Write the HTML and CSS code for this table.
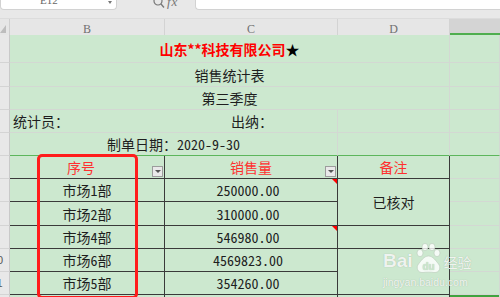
FILE: index.html
```html
<!DOCTYPE html>
<html lang="zh">
<head>
<meta charset="utf-8">
<link rel="stylesheet" href="styles.css">
</head>
<body>
<div class="app">
  <div class="toolbar">
    <div class="namebox"><span class="cellref">E12</span><span class="nb-arrow"></span></div>
    <div class="fxzone">
      <svg class="mag" width="12" height="10" viewBox="0 0 12 10"><circle cx="5" cy="2" r="4" fill="none" stroke="#777" stroke-width="1.2"/><line x1="8" y1="5" x2="11" y2="8.5" stroke="#777" stroke-width="1.3"/></svg>
      <span class="fx">fx</span>
    </div>
    <div class="formula"></div>
  </div>
  <div class="colheads">
    <div class="corner"><span class="tri"></span></div>
    <div class="ch">B</div>
    <div class="ch">C</div>
    <div class="ch">D</div>
    <div class="ch ch-sel"></div>
  </div>
  <div class="sheet">
    <!-- row 1 -->
    <div class="rh"></div>
    <div class="c span3 center title">山东**科技有限公司<span class="star">★</span></div>
    <div class="c"></div>
    <!-- row 2 -->
    <div class="rh"></div>
    <div class="c span3 center">销售统计表</div>
    <div class="c"></div>
    <!-- row 3 -->
    <div class="rh"></div>
    <div class="c span3 center">第三季度</div>
    <div class="c"></div>
    <!-- row 4 -->
    <div class="rh"></div>
    <div class="c span2 left"><span class="lbl">统计员：</span><span>出纳：</span></div>
    <div class="c"></div>
    <div class="c"></div>
    <!-- row 5 -->
    <div class="rh"></div>
    <div class="c span2 center gb">制单日期：2020-9-30</div>
    <div class="c gb"></div>
    <div class="c gb"></div>
    <!-- row 6 header -->
    <div class="rh"></div>
    <div class="c th tb center hb"><span class="ht">序号</span><span class="filter"></span></div>
    <div class="c th tb center"><span class="ht">销售量</span><span class="filter"></span></div>
    <div class="c th tb center">备注</div>
    <div class="c"></div>
    <!-- row 7 -->
    <div class="rh"></div>
    <div class="c tb center">市场1部</div>
    <div class="c tb center num cmt">250000.00</div>
    <div class="c tb center rows2">已核对</div>
    <div class="c"></div>
    <!-- row 8 -->
    <div class="rh"></div>
    <div class="c tb center">市场2部</div>
    <div class="c tb center num">310000.00</div>
    <div class="c"></div>
    <!-- row 9 -->
    <div class="rh"></div>
    <div class="c tb center">市场4部</div>
    <div class="c tb center num cmt">546980.00</div>
    <div class="c tb"></div>
    <div class="c"></div>
    <!-- row 10 -->
    <div class="rh"><span class="rn">10</span></div>
    <div class="c tb center">市场6部</div>
    <div class="c tb center num">4569823.00</div>
    <div class="c tb rows2"></div>
    <div class="c"></div>
    <!-- row 11 -->
    <div class="rh"><span class="rn">11</span></div>
    <div class="c tb center">市场5部</div>
    <div class="c tb center num">354260.00</div>
    <div class="c"></div>
    <!-- row 12 -->
    <div class="rh"></div>
    <div class="c tb"></div>
    <div class="c tb"></div>
    <div class="c tb"></div>
    <div class="c sel"></div>
  </div>
  <div class="frame"></div>
  <div class="watermark">
    <div class="wm-top">
      <span class="wm-bai">Bai</span>
      <svg class="paw" width="27" height="31" viewBox="0 0 27 31">
        <g fill="#ffffff" fill-opacity="0.8" stroke="#b9c9bb" stroke-width="0.6">
          <ellipse cx="5" cy="10" rx="3" ry="3.6"/>
          <ellipse cx="10" cy="4" rx="3" ry="3.6"/>
          <ellipse cx="17" cy="4" rx="3" ry="3.6"/>
          <ellipse cx="22" cy="10" rx="3" ry="3.6"/>
          <path d="M13.5 13 C9 13 6 18 3.5 21 C1 24 2 30 8 29.5 C11 29 16 29 19 29.5 C25 30 26 24 23.5 21 C21 18 18 13 13.5 13 Z"/>
        </g>
        <text x="13.5" y="27" text-anchor="middle" font-family="Liberation Sans, sans-serif" font-weight="bold" font-size="10" fill="#cce8cf">du</text>
      </svg>
      <span class="wm-jy">经验</span>
    </div>
    <div class="wm-url">jingyan.baidu.com</div>
  </div>
</div>
</body>
</html>
```
FILE: styles.css
```css
* { box-sizing: border-box; margin: 0; padding: 0; }
html, body { width: 500px; height: 297px; overflow: hidden; }
body {
  background: #e8e8e8;
  font-family: "Noto Sans Mono CJK SC", "Noto Sans CJK SC", sans-serif;
  color: #1e1e1e;
}
.app { position: relative; width: 500px; height: 297px; overflow: hidden; }

/* toolbar */
.toolbar { display: flex; height: 11px; align-items: flex-start; }
.namebox {
  position: relative;
  width: 117px; height: 10px;
  background: #fff;
  border: 1px solid #d2d2d2; border-top: none;
  border-radius: 0 0 4px 4px;
  overflow: hidden;
  padding-left: 39px;
}
.cellref {
  display: block;
  font: 11px/11px "Liberation Serif", serif;
  color: #666;
  margin-top: -5px;
}
.nb-arrow {
  position: absolute; right: 4px; top: 1px;
  border-top: 3px solid #777; border-left: 2px solid transparent; border-right: 2px solid transparent;
}
.fxzone { display: flex; align-items: flex-start; width: 78px; padding-left: 36px; gap: 2px; }
.mag { display: block; margin-top: -1px; }
.fx {
  font: italic 13px/13px "Liberation Serif", serif;
  color: #777;
  margin-top: -5px;
  letter-spacing: 1px;
}
.formula {
  flex: 1; height: 10px;
  background: #fff;
  border: 1px solid #d2d2d2; border-top: none; border-right: none;
  border-radius: 0 0 0 4px;
}

/* column headers */
.colheads {
  margin-top: 7px;
  height: 17px;
  display: grid;
  grid-template-columns: 10px 155px 173px 112px 50px;
  border-top: 1px solid #dcdcdc;
  background: #e6e6e6;
}
.corner {
  border-right: 1px solid #cfcfcf;
  display: flex; align-items: flex-end; padding-bottom: 2px;
}
.tri {
  display: block; width: 0; height: 0;
  border-left: 6px solid transparent;
  border-bottom: 8px solid #bdbdbd;
}
.ch {
  border-right: 1px solid #d3d3d3;
  display: flex; justify-content: center; align-items: center;
  padding-top: 3px;
  font: 12px/12px "Liberation Serif", serif;
  color: #707070;
}
.ch-sel { background: #d4d4d4; border-bottom: 2px solid #4fae4f; border-right: none; }

/* sheet grid */
.sheet {
  display: grid;
  grid-template-columns: 10px 155px 173px 112px 50px;
  grid-template-rows: 28px 24px 23px 23px 23px 23px 23px 24px 23px 23px 23px 20px;
}
.rh {
  background: #e8e8e8;
  border-right: 1px solid #c9c9c9;
  border-bottom: 1px solid #d4d4d4;
  overflow: hidden;
  font: 11px/22px "Liberation Sans", sans-serif;
  color: #555;
}
.rn { display: block; width: 30px; margin-left: -18px; text-align: center; }
.c {
  position: relative;
  background: #cce8cf;
  border-right: 1px solid #d3d8d3;
  border-bottom: 1px solid #d3d8d3;
  display: flex; align-items: center;
  font-size: 14px;
  white-space: nowrap;
}
.span3 { grid-column: span 3; }
.span2 { grid-column: span 2; }
.rows2 { grid-row: span 2; }
.center { justify-content: center; }
.left { justify-content: flex-start; padding-left: 3px; }
.lbl { display: inline-block; width: 218px; }
.title { color: #ff0000; font-weight: bold; padding-top: 1px; }
.star { color: #000; font-weight: normal; }
.gb { border-bottom: 1px solid #5cb65c; }
.tb { border-right: 1px solid #3a3a3a; border-bottom: 1px solid #3a3a3a; }
.th { color: #ff3030; }
.hb .ht { margin-right: 12px; }
.filter {
  position: absolute; right: 1px; bottom: 1px;
  width: 11px; height: 11px;
  background: #e9e9e9;
  border: 1px solid #9c9c9c;
}
.filter::after {
  content: ""; position: absolute; left: 2px; top: 3px;
  border-top: 3px solid #555; border-left: 3px solid transparent; border-right: 3px solid transparent;
}
.num { padding-right: 6px; }
.cmt::after {
  content: ""; position: absolute; top: 0; right: 0;
  border-top: 5px solid #ff0000; border-left: 5px solid transparent;
}
.sel { box-shadow: inset 0 2px 0 #3fa43f; }

/* annotation frame */
.frame {
  position: absolute; left: 37px; top: 154px;
  width: 101px; height: 145px;
  border: 3px solid #ff1c1c;
  border-radius: 5px;
}

/* watermark */
.watermark {
  position: absolute; left: 383px; top: 242px;
  color: rgba(255,255,255,0.85);
  text-shadow: 0 0 1px rgba(120,140,120,0.6);
}
.wm-top { display: flex; align-items: flex-end; height: 32px; }
.wm-bai { font: bold 19px/20px "Liberation Sans", sans-serif; margin-bottom: 3px; }
.paw { display: block; margin-left: 2px; }
.wm-jy { font: 14px/16px "Noto Sans CJK SC", sans-serif; margin-left: 2px; margin-bottom: 4px; }
.wm-url { font: 10.5px/12px "Liberation Sans", sans-serif; margin-top: 2px; }
```
